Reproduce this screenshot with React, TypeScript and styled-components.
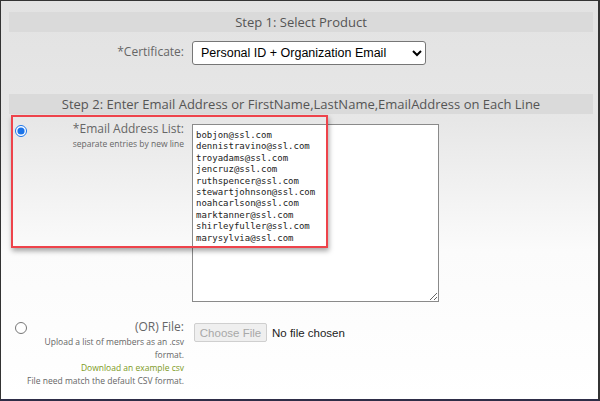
import styled, { createGlobalStyle } from "styled-components";

const emails = [
  "bobjon@ssl.com",
  "dennistravino@ssl.com",
  "troyadams@ssl.com",
  "jencruz@ssl.com",
  "ruthspencer@ssl.com",
  "stewartjohnson@ssl.com",
  "noahcarlson@ssl.com",
  "marktanner@ssl.com",
  "shirleyfuller@ssl.com",
  "marysylvia@ssl.com",
];

export default function App() {
  return (
    <>
      <GlobalStyle />
      <StyledFrame>
        <StyledStepBar>Step 1: Select Product</StyledStepBar>

        <StyledRow $top={9}>
          <StyledLabelCell>
            <StyledLabelText>
              <StyledMainLabel $shift={3}>*Certificate:</StyledMainLabel>
            </StyledLabelText>
          </StyledLabelCell>
          <StyledSelect defaultValue="pid-org">
            <option value="pid-org">Personal ID + Organization Email</option>
          </StyledSelect>
        </StyledRow>

        <StyledStepBar $top={29}>
          Step 2: Enter Email Address or FirstName,LastName,EmailAddress on Each
          Line
        </StyledStepBar>

        <StyledRow $top={10}>
          <StyledLabelCell>
            <StyledRadio type="radio" name="source" defaultChecked />
            <StyledLabelText>
              <StyledMainLabel $shift={-3}>*Email Address List:</StyledMainLabel>
              <StyledHint>separate entries by new line</StyledHint>
            </StyledLabelText>
          </StyledLabelCell>
          <StyledTextarea defaultValue={emails.join("\n")} spellCheck={false} />
          <StyledHighlight />
        </StyledRow>

        <StyledRow $top={19}>
          <StyledLabelCell>
            <StyledRadio type="radio" name="source" />
            <StyledLabelText>
              <StyledMainLabel $shift={-2}>(OR) File:</StyledMainLabel>
              <StyledHint>
                Upload a list of members as an .csv
                <br />
                format.
              </StyledHint>
              <StyledHint $link>Download an example csv</StyledHint>
              <StyledHint>File need match the default CSV format.</StyledHint>
            </StyledLabelText>
          </StyledLabelCell>
          <StyledFileField>
            <StyledFileButton disabled>Choose File</StyledFileButton>
            <span>No file chosen</span>
          </StyledFileField>
        </StyledRow>
      </StyledFrame>
    </>
  );
}

const GlobalStyle = createGlobalStyle`
  * { box-sizing: border-box; }
  body {
    margin: 0;
    font-family: "Open Sans", "Liberation Sans", sans-serif;
  }
`;

const StyledFrame = styled.div`
  width: 600px;
  height: 401px;
  overflow: hidden;
  padding: 11px 5px 0 8px;
  border: 1px solid #333;
  border-right-width: 2px;
  border-bottom: 2px solid #2e2d47;
  background: linear-gradient(to bottom, #e2e2e2 0, #e7e7e7 120px, #fbfbfb 250px, #fff 100%);
`;

const StyledStepBar = styled.div<{ $top?: number }>`
  margin-top: ${({ $top }) => $top ?? 0}px;
  height: 20px;
  line-height: 20px;
  background: #dadada;
  color: #555;
  font-size: 13px;
  text-align: center;
  white-space: nowrap;
`;

const StyledRow = styled.div<{ $top: number }>`
  position: relative;
  display: grid;
  grid-template-columns: 175px auto;
  column-gap: 8px;
  align-items: start;
  margin-top: ${({ $top }) => $top}px;
`;

const StyledLabelCell = styled.div`
  display: flex;
  align-items: flex-start;
  padding-left: 6px;
`;

const StyledLabelText = styled.div`
  display: flex;
  flex-direction: column;
  align-items: flex-end;
  text-align: right;
  margin-left: auto;
`;

const StyledMainLabel = styled.label<{ $shift: number }>`
  margin-top: ${({ $shift }) => $shift}px;
  color: #666;
  font-size: 12px;
  line-height: 16px;
  white-space: nowrap;
`;

const StyledHint = styled.div<{ $link?: boolean }>`
  color: ${({ $link }) => ($link ? "#7d9a1c" : "#666")};
  font-size: 8.5px;
  line-height: 13px;
  white-space: nowrap;
`;

const StyledRadio = styled.input`
  width: 12px;
  height: 12px;
  margin: 1px 0 0;
  accent-color: #1a73e8;
`;

const StyledSelect = styled.select`
  width: 234px;
  height: 24px;
  padding: 0 4px;
  border: 1px solid #767676;
  border-radius: 3px;
  background: #fff;
  color: #000;
  font-family: "Liberation Sans", Arial, sans-serif;
  font-size: 12.5px;
`;

const StyledTextarea = styled.textarea`
  width: 247px;
  height: 178px;
  padding: 5px 3px 3px;
  border: 1px solid #8a8a8a;
  border-radius: 0;
  background: #fff;
  color: #222;
  font-family: "DejaVu Sans Mono", monospace;
  font-size: 9px;
  line-height: 11.4px;
  resize: both;
`;

const StyledHighlight = styled.div`
  position: absolute;
  top: -9px;
  left: 2px;
  width: 317px;
  height: 133px;
  border: 2px solid #ee434b;
  box-shadow: 1px 3px 5px rgba(0, 0, 0, 0.35);
  pointer-events: none;
`;

const StyledFileField = styled.div`
  display: flex;
  align-items: center;
  gap: 5px;
  padding: 2px 0 0 2px;
  color: #222;
  font-family: "Liberation Sans", Arial, sans-serif;
  font-size: 11.5px;
`;

const StyledFileButton = styled.button`
  width: 73px;
  height: 19px;
  padding: 0;
  border: 1px solid #cfcfcf;
  border-radius: 2px;
  background: #efefef;
  color: #a8a8a8;
  font-family: "Liberation Sans", Arial, sans-serif;
  font-size: 11.5px;
`;
